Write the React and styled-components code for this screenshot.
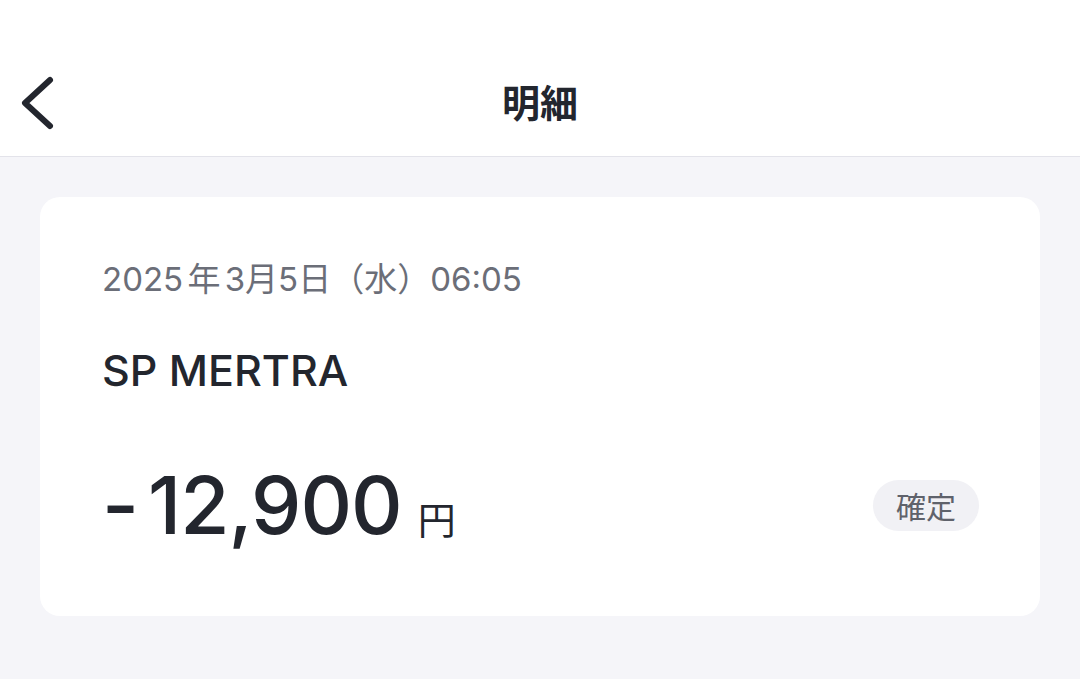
import React from "react";
import styled, { createGlobalStyle } from "styled-components";

const GlobalStyle = createGlobalStyle`
  html, body {
    margin: 0;
    padding: 0;
    background: #f5f5f9;
  }
  body {
    font-family: "Inter", "Noto Sans CJK JP", sans-serif;
    color: #23262e;
  }
`;

const App = () => {
  return (
    <Page>
      <GlobalStyle />
      <Header>
        <BackButton aria-label="back">
          <svg width="60" height="60" viewBox="0 0 60 60" fill="none">
            <path
              d="M40 7 L15 30 L40 53"
              stroke="#23262e"
              strokeWidth="6"
              strokeLinecap="round"
              strokeLinejoin="round"
            />
          </svg>
        </BackButton>
        <Title>明細</Title>
      </Header>
      <Body>
        <Card>
          <DateText>2025 年 3月5日（水）06:05</DateText>
          <Merchant>SP MERTRA</Merchant>
          <AmountRow>
            <Amount>
              <Minus>-</Minus>12,900<Yen>円</Yen>
            </Amount>
            <Badge>確定</Badge>
          </AmountRow>
        </Card>
      </Body>
    </Page>
  );
};

export default App;

const Page = styled.div`
  width: 100%;
  min-height: 100vh;
  background: #f5f5f9;
`;

const Header = styled.div`
  position: relative;
  height: 157px;
  background: #ffffff;
  border-bottom: 1px solid #e3e3ea;
  display: flex;
  align-items: center;
  justify-content: center;
  padding-top: 44px;
  box-sizing: border-box;
`;

const BackButton = styled.div`
  position: absolute;
  left: 10px;
  top: 73px;
  display: flex;
`;

const Title = styled.div`
  font-family: "Noto Sans CJK JP", sans-serif;
  font-size: 38px;
  font-weight: 700;
  color: #23262e;
`;

const Body = styled.div`
  padding: 40px 40px;
`;

const Card = styled.div`
  background: #ffffff;
  border-radius: 20px;
  height: 419px;
  box-sizing: border-box;
  padding: 58px 62px 0 62px;
  display: flex;
  flex-direction: column;
`;

const DateText = styled.div`
  font-family: "Inter", "Noto Sans CJK JP", sans-serif;
  font-size: 33px;
  color: #6b6e78;
  line-height: 48px;
  word-spacing: -5px;
`;

const Merchant = styled.div`
  margin-top: 41px;
  font-family: "Inter", sans-serif;
  font-size: 43px;
  font-weight: 500;
  line-height: 52px;
  color: #23262e;
`;

const AmountRow = styled.div`
  margin-top: 64px;
  display: flex;
  align-items: center;
  justify-content: space-between;
`;

const Amount = styled.div`
  font-family: "Inter", sans-serif;
  font-size: 80px;
  font-weight: 500;
  line-height: 90px;
  color: #23262e;
  letter-spacing: -1px;
`;

const Minus = styled.span`
  margin-right: 10px;
`;

const Yen = styled.span`
  font-family: "Noto Sans CJK JP", sans-serif;
  font-size: 38px;
  font-weight: 400;
  margin-left: 16px;
`;

const Badge = styled.div`
  font-family: "Noto Sans CJK JP", sans-serif;
  font-size: 30px;
  color: #5f626b;
  background: #f1f1f5;
  border-radius: 26px;
  padding: 3px 23px;
  line-height: 45px;
  margin-right: -1px;
  margin-top: -12px;
`;
